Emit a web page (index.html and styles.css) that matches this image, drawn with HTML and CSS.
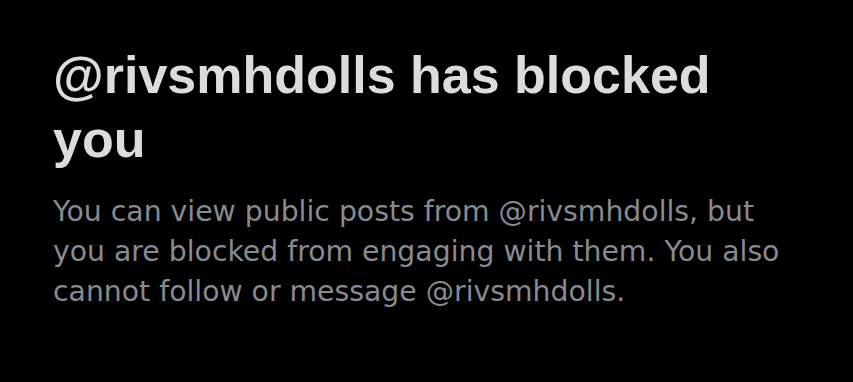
FILE: index.html
```html
<!DOCTYPE html>
<html lang="en">
<head>
<meta charset="utf-8">
<title>Blocked</title>
<link rel="stylesheet" href="styles.css">
</head>
<body>
<main class="blocked">
  <h1 class="blocked-title">@rivsmhdolls has blocked you</h1>
  <p class="blocked-text">You can view public posts from @rivsmhdolls, but you are blocked from engaging with them. You also cannot follow or message @rivsmhdolls.</p>
</main>
</body>
</html>
```
FILE: styles.css
```css
html, body {
  margin: 0;
  padding: 0;
  background: #000;
}
body {
  width: 853px;
  height: 382px;
  overflow: hidden;
}
.blocked {
  display: flex;
  flex-direction: column;
  gap: 21px;
  padding: 43px 0 0 53px;
  width: 745px;
}
.blocked-title {
  margin: 0;
  font-family: "Liberation Sans", Arial, sans-serif;
  font-weight: 700;
  font-size: 52px;
  line-height: 64px;
  color: #dcdcdc;
}
.blocked-text {
  margin: 0;
  font-family: "DejaVu Sans", sans-serif;
  font-weight: 400;
  font-size: 28.3px;
  line-height: 40px;
  color: #878b90;
}
```
